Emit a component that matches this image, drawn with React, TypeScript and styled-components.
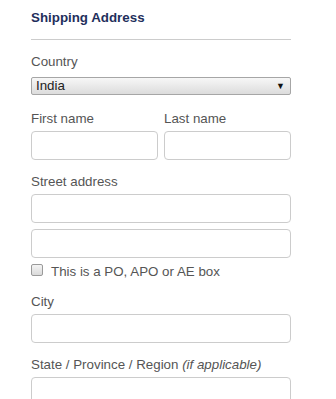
import React from 'react';
import styled, { createGlobalStyle } from 'styled-components';

const GlobalStyle = createGlobalStyle`
  body {
    margin: 0;
    background: #fff;
    font-family: 'Liberation Sans', Arial, sans-serif;
  }
`;

const Page = styled.div`
  width: 260px;
  padding: 10px 45px 0 31px;
  color: #555;
  font-size: 13.333px;
`;

const Title = styled.h2`
  margin: 0;
  font-size: 13.333px;
  line-height: 16px;
  font-weight: bold;
  color: #1f2f5c;
`;

const Divider = styled.hr`
  margin: 13px 0 14px;
  border: none;
  border-top: 1px solid #ccc;
  height: 0;
`;

const Field = styled.div<{ $gap?: number }>`
  display: flex;
  flex-direction: column;
  margin-bottom: ${(p) => p.$gap ?? 14}px;
`;

const Row = styled.div`
  display: flex;
  gap: 6px;
  margin-bottom: 14px;

  & > div {
    flex: 1;
    margin-bottom: 0;
  }
`;

const Label = styled.label`
  display: block;
  line-height: 16px;
  margin-bottom: 4px;
  color: #555;

  em {
    font-style: italic;
  }
`;

const TextInput = styled.input`
  box-sizing: border-box;
  width: 100%;
  height: 29px;
  margin: 0;
  border: 1px solid #ccc;
  border-radius: 4px;
  background: #fff;
  font: inherit;
`;

const StackedInput = styled(TextInput)`
  & + & {
    margin-top: 6px;
  }
`;

const Select = styled.div`
  box-sizing: border-box;
  height: 18px;
  margin-top: 3px;
  display: flex;
  align-items: center;
  justify-content: space-between;
  padding: 0 5px 0 4px;
  border: 1px solid #a6a6a6;
  border-radius: 2px;
  background: linear-gradient(#f7f7f7, #dcdcdc);
  color: #222;
  line-height: 16px;
`;

const Arrow = styled.span`
  font-size: 9px;
  color: #111;
`;

const CheckRow = styled.label`
  display: flex;
  align-items: flex-start;
  gap: 8px;
  margin-top: 6px;
  line-height: 16px;
  color: #555;
`;

const Box = styled.span`
  box-sizing: border-box;
  flex: none;
  width: 12px;
  height: 12px;
  border: 1px solid #9a9a9a;
  border-radius: 2px;
  background: linear-gradient(#f4f4f4, #dadada);
`;

const App: React.FC = () => {
  return (
    <Page>
      <GlobalStyle />
      <Title>Shipping Address</Title>
      <Divider />
      <Field $gap={16}>
        <Label>Country</Label>
        <Select>
          <span>India</span>
          <Arrow>▼</Arrow>
        </Select>
      </Field>
      <Row>
        <Field>
          <Label>First name</Label>
          <TextInput />
        </Field>
        <Field>
          <Label>Last name</Label>
          <TextInput />
        </Field>
      </Row>
      <Field>
        <Label>Street address</Label>
        <StackedInput />
        <StackedInput />
        <CheckRow>
          <Box />
          This is a PO, APO or AE box
        </CheckRow>
      </Field>
      <Field>
        <Label>City</Label>
        <TextInput />
      </Field>
      <Field>
        <Label>
          State / Province / Region <em>(if applicable)</em>
        </Label>
        <TextInput />
      </Field>
    </Page>
  );
};

export default App;
